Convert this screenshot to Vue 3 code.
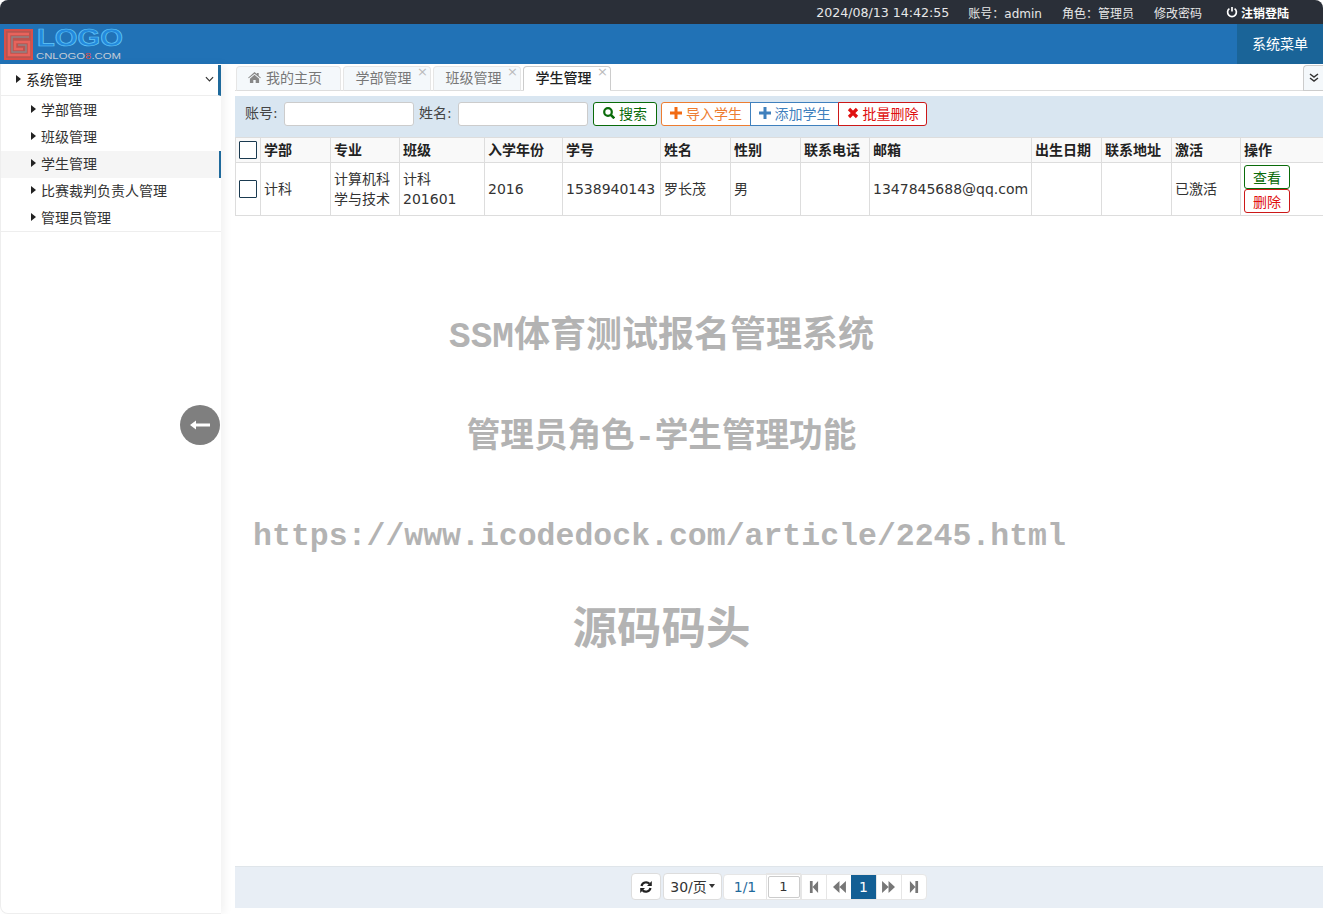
<template>
  <div class="page">
    <div class="topbar">
      <span class="time">2024/08/13 14:42:55</span>
      <span>账号：<em>admin</em></span>
      <span>角色：管理员</span>
      <span>修改密码</span>
      <span class="logout">
        <svg viewBox="0 0 12 12" class="ico-power"><path d="M3.400 2.600a4.400 4.400 0 1 0 5.200 0M6 1v4.600" fill="none" stroke="#fff" stroke-width="1.700"/></svg>
        注销登陆
      </span>
    </div>

    <div class="header">
      <svg class="logo" viewBox="0 0 126 40" width="126" height="40">
        <rect x="4" y="5" width="29" height="31" fill="#d9504a"/>
        <rect x="6" y="7" width="25" height="27" fill="#b9544f"/>
        <path d="M29 10H9v21h20V18H15v7h8" fill="none" stroke="#e8635c" stroke-width="2.500"/>
        <path d="M29 13H12v15h14v-7h-8" fill="none" stroke="#8f8285" stroke-width="1.500"/>
        <text x="37" y="22" textLength="86" lengthAdjust="spacingAndGlyphs" class="logo-big">LOGO</text>
        <text x="36" y="35" textLength="85" lengthAdjust="spacingAndGlyphs" class="logo-small">CNLOGO<tspan class="logo-eight">8</tspan>.COM</text>
      </svg>
      <div class="sys-menu">系统菜单</div>
    </div>

    <div class="main">
      <aside class="sidebar">
        <div class="menu-title">
          <span class="arrow"></span>
          <span class="menu-text">系统管理</span>
          <svg class="chev" viewBox="0 0 10 6"><path d="M1 1l4 4 4-4" fill="none" stroke="#333" stroke-width="1.300"/></svg>
        </div>
        <div class="menu-list">
          <div v-for="item in menus" :key="item" :class="['menu-item', { active: item === '学生管理' }]">
            <span class="arrow"></span>{{ item }}
          </div>
        </div>
        <button class="collapse">
          <svg viewBox="0 0 20 10" width="20" height="10"><path d="M0 5l6-4.500v3h14v3H6v3z" fill="#fff"/></svg>
        </button>
      </aside>

      <div class="content">
        <div class="tabs">
          <div class="tab home">
            <svg viewBox="0 0 14 12" class="ico-home"><path d="M7 0l2.600 2.300V1h2v3l2.400 2.200-.7.7L7 2 .7 6.900 0 6.200zM2 7.300L7 3l5 4.300V12H8.300V8.700H5.700V12H2z" fill="#888"/></svg>
            我的主页
          </div>
          <div v-for="t in tabs" :key="t" :class="['tab', { current: t === '学生管理' }]">
            {{ t }}<span class="tab-close">×</span>
          </div>
          <div class="tab-more">
            <svg viewBox="0 0 10 10" width="10" height="10"><path d="M1 1l4 3 4-3M1 5l4 3 4-3" fill="none" stroke="#333" stroke-width="1.500"/></svg>
          </div>
        </div>

        <div class="toolbar">
          <label>账号:</label><input class="field" type="text" />
          <label class="second">姓名:</label><input class="field" type="text" />
          <button class="btn search">
            <svg viewBox="0 0 12 12" class="ico"><circle cx="5" cy="5" r="3.800" fill="none" stroke="#0a6b0a" stroke-width="2.200"/><path d="M7.800 7.800L11.300 11.300" stroke="#0a6b0a" stroke-width="2.600"/></svg>
            搜索
          </button>
          <div class="btn-group">
            <button class="btn import">
              <svg viewBox="0 0 12 12" class="ico"><path d="M6 0v12M0 6h12" stroke="#f26a12" stroke-width="3"/></svg>
              导入学生
            </button>
            <button class="btn add">
              <svg viewBox="0 0 12 12" class="ico"><path d="M6 0v12M0 6h12" stroke="#3f80bd" stroke-width="3"/></svg>
              添加学生
            </button>
            <button class="btn del">
              <svg viewBox="0 0 12 12" class="ico"><path d="M2 2l8 8M10 2l-8 8" stroke="#e01010" stroke-width="3.200"/></svg>
              批量删除
            </button>
          </div>
        </div>

        <table class="grid">
          <colgroup>
            <col v-for="(w, i) in widths" :key="i" :style="{ width: w + 'px' }" />
          </colgroup>
          <thead>
            <tr>
              <th class="check"><span class="box"></span></th>
              <th v-for="c in columns" :key="c">{{ c }}</th>
            </tr>
          </thead>
          <tbody>
            <tr>
              <td class="check"><span class="box"></span></td>
              <td>计科</td>
              <td>计算机科学与技术</td>
              <td>计科<br />201601</td>
              <td>2016</td>
              <td>1538940143</td>
              <td>罗长茂</td>
              <td>男</td>
              <td></td>
              <td>1347845688@qq.com</td>
              <td></td>
              <td></td>
              <td>已激活</td>
              <td class="ops">
                <button class="op view">查看</button>
                <button class="op remove">删除</button>
              </td>
            </tr>
          </tbody>
        </table>

        <div class="spacer"></div>

        <div class="pager">
          <button class="pg-btn refresh">
            <svg viewBox="0 0 14 14" width="14" height="14">
              <path d="M2.500 6a4.700 4.700 0 0 1 8-2.200M11.500 8a4.700 4.700 0 0 1-8 2.200" fill="none" stroke="#222" stroke-width="2.200"/>
              <path d="M12.800 1v5H8zM1.200 13V8H6z" fill="#222"/>
            </svg>
          </button>
          <button class="pg-btn size">30/页<span class="caret"></span></button>
          <div class="pg-group">
            <span class="pg-info">1/1</span>
            <span class="pg-input-wrap"><input class="pg-input" value="1" /></span>
            <span class="pg-cell"><svg viewBox="0 0 11 13" width="10" height="12"><path d="M1 0h3v13H1zM10 0v13L4 6.500z" fill="#777"/></svg></span>
            <span class="pg-cell"><svg viewBox="0 0 15 13" width="14" height="12"><path d="M8 0v13L1 6.500zM15 0v13L8 6.500z" fill="#777"/></svg></span>
            <span class="pg-cell on">1</span>
            <span class="pg-cell"><svg viewBox="0 0 15 13" width="14" height="12"><path d="M0 0v13l7-6.500zM7 0v13l7-6.500z" fill="#777"/></svg></span>
            <span class="pg-cell"><svg viewBox="0 0 11 13" width="10" height="12"><path d="M1 0v13l6-6.500zM7 0h3v13H7z" fill="#777"/></svg></span>
          </div>
        </div>
      </div>
    </div>

    <div class="watermark">
      <p class="w1">SSM体育测试报名管理系统</p>
      <p class="w2">管理员角色-学生管理功能</p>
      <p class="w3">https://www.icodedock.com/article/2245.html</p>
      <p class="w4">源码码头</p>
    </div>
  </div>
</template>

<script setup>
const menus = ['学部管理', '班级管理', '学生管理', '比赛裁判负责人管理', '管理员管理']
const tabs = ['学部管理', '班级管理', '学生管理']
const columns = ['学部', '专业', '班级', '入学年份', '学号', '姓名', '性别', '联系电话', '邮箱', '出生日期', '联系地址', '激活', '操作']
const widths = [25, 70, 69, 85, 78, 98, 70, 70, 69, 162, 70, 70, 69, 83]
</script>

<style>
html, body {
  margin: 0;
  background: #fff;
}
</style>

<style scoped>
.page {
  position: relative;
  display: flex;
  flex-direction: column;
  height: 914px;
  overflow: hidden;
  font-family: "DejaVu Sans", "Noto Sans CJK SC", sans-serif;
  font-size: 14px;
  color: #333;
}

.topbar {
  height: 24px;
  flex: none;
  display: flex;
  justify-content: flex-end;
  align-items: center;
  gap: 20px;
  padding-right: 34px;
  background: #2a2f38;
  color: #e8e8e8;
  font-size: 12px;
  border-radius: 8px 8px 0 0;
}

.topbar em {
  font-style: normal;
  font-size: 12px;
}

.time {
  margin-right: -1px;
  font-size: 12.600px;
}

.logout {
  display: flex;
  align-items: center;
  gap: 3px;
  margin-left: 4px;
  font-weight: bold;
  color: #fff;
}

.ico-power {
  width: 12px;
  height: 12px;
}

.header {
  height: 40px;
  flex: none;
  display: flex;
  justify-content: space-between;
  align-items: center;
  background: #2172b6;
}

.logo-big {
  font-family: "Liberation Sans", sans-serif;
  font-size: 24px;
  font-weight: bold;
  fill: #2389dc;
  stroke: #62c6f7;
  stroke-width: 0.700;
}

.logo-small {
  font-family: "Liberation Sans", sans-serif;
  font-size: 9px;
  fill: #c4cdd6;
}

.logo-eight {
  fill: #d9504a;
}

.sys-menu {
  width: 86px;
  height: 40px;
  line-height: 40px;
  text-align: center;
  background: #1a6498;
  color: #fff;
  font-size: 14px;
}

.main {
  flex: 1;
  display: flex;
  min-height: 0;
}

.sidebar {
  position: relative;
  width: 221px;
  flex: none;
  margin-right: 14px;
  background: #fff;
  border-left: 1px solid #eee;
  border-bottom: 1px solid #eee;
  border-bottom-left-radius: 8px;
  box-sizing: border-box;
  box-shadow: 4px 0 8px rgba(0, 0, 0, 0.05);
}

.menu-title {
  display: flex;
  align-items: center;
  height: 31px;
  margin-top: 1px;
  padding: 0 0 3px 15px;
  border-bottom: 1px solid #eee;
  border-right: 3px solid #1f6a9c;
  box-sizing: border-box;
  color: #222;
}

.menu-text {
  flex: 1;
}

.arrow {
  display: inline-block;
  width: 0;
  height: 0;
  margin-right: 5px;
  border-left: 5px solid #222;
  border-top: 4px solid transparent;
  border-bottom: 4px solid transparent;
}

.chev {
  width: 9px;
  height: 6px;
  margin-right: 4px;
}

.menu-list {
  height: 136px;
  padding-top: 1px;
  border-bottom: 1px solid #eee;
  box-sizing: border-box;
}

.menu-item {
  display: flex;
  align-items: center;
  height: 27px;
  padding: 0 0 4px 30px;
  font-size: 14px;
  color: #333;
  box-sizing: border-box;
}

.menu-item.active {
  background: #f5f5f5;
  box-shadow: inset -2px 0 0 #1f6a9c;
}

.collapse {
  position: absolute;
  top: 341px;
  right: 1px;
  display: flex;
  align-items: center;
  justify-content: center;
  width: 40px;
  height: 40px;
  padding: 0;
  border: none;
  border-radius: 50%;
  background: #7f7f7f;
}

.content {
  flex: 1;
  min-width: 0;
  display: flex;
  flex-direction: column;
  padding-bottom: 6px;
}

.tabs {
  display: flex;
  align-items: flex-end;
  height: 27px;
  gap: 2px;
  padding-left: 1px;
  border-bottom: 1px solid #ddd;
  box-sizing: border-box;
}

.tab {
  position: relative;
  display: flex;
  align-items: center;
  justify-content: center;
  gap: 5px;
  width: 88px;
  height: 25px;
  margin-bottom: -1px;
  padding: 0 7px 3px 0;
  border: 1px solid #e6e6e6;
  border-bottom: 1px solid #ddd;
  border-radius: 4px 4px 0 0;
  background: #f4f8fb;
  color: #777;
  font-size: 14px;
  box-sizing: border-box;
}

.tab.home {
  width: 105px;
}

.tab.current {
  background: #fff;
  border-color: #ccc;
  border-bottom-color: #fff;
  color: #222;
  font-weight: 500;
}

.tab-close {
  position: absolute;
  top: -3px;
  right: 2px;
  font-size: 13px;
  color: #bbb;
}

.ico-home {
  width: 13px;
  height: 11px;
}

.tab-more {
  display: flex;
  align-items: center;
  justify-content: center;
  width: 20px;
  height: 26px;
  margin-left: auto;
  margin-bottom: -1px;
  border: 1px solid #ccc;
  border-right: none;
  border-radius: 4px 0 0 0;
  box-sizing: border-box;
  background: #f4f8fb;
}

.toolbar {
  display: flex;
  align-items: flex-start;
  height: 41px;
  margin-top: 5px;
  padding: 6px 0 0 10px;
  flex: none;
  background: #d9e6f1;
  color: #444;
  font-size: 14px;
  box-sizing: border-box;
}

.toolbar label {
  width: 39px;
  line-height: 22px;
  white-space: nowrap;
}

.toolbar label.second {
  margin-left: 5px;
}

.field {
  width: 130px;
  height: 24px;
  border: 1px solid #ccc;
  border-radius: 3px;
  box-sizing: border-box;
  background: #fff;
  outline: none;
}

.btn {
  display: inline-flex;
  align-items: center;
  justify-content: center;
  gap: 4px;
  height: 24px;
  padding: 0 0 2px;
  background: #fff;
  border: 1px solid;
  font-family: inherit;
  font-size: 14px;
  box-sizing: border-box;
}

.ico {
  width: 12px;
  height: 12px;
}

.search {
  width: 64px;
  margin-left: 5px;
  border-color: #0a6b0a;
  border-radius: 3px;
  color: #0a6b0a;
}

.btn-group {
  display: flex;
  margin-left: 4px;
}

.import {
  width: 90px;
  border-color: #ed7d31;
  border-radius: 3px 0 0 3px;
  color: #ed7d31;
}

.add {
  width: 89px;
  margin-left: -1px;
  border-color: #3f80bd;
  color: #3f80bd;
}

.del {
  width: 89px;
  margin-left: -1px;
  border-color: #cc1818;
  border-radius: 0 3px 3px 0;
  color: #e01010;
}

.grid {
  width: 1088px;
  table-layout: fixed;
  border-collapse: collapse;
  flex: none;
  color: #333;
  font-size: 14px;
}

.grid th,
.grid td {
  border: 1px solid #ddd;
  padding: 0 0 0 3px;
  text-align: left;
  line-height: 20px;
  box-sizing: border-box;
}

.grid th {
  height: 25px;
  background: #f9f9f9;
  font-weight: bold;
  color: #222;
  white-space: nowrap;
}

.grid td {
  height: 53px;
  word-break: break-all;
}

.grid .check {
  padding: 0;
  text-align: center;
}

.box {
  display: block;
  width: 16px;
  height: 16px;
  margin: 0 auto;
  border: 1px solid #1a3a50;
  background: #fff;
  border-radius: 1px;
}

.ops {
  line-height: 0;
}

.op {
  display: block;
  width: 46px;
  height: 24px;
  padding: 0 0 1px;
  background: #fff;
  border: 1px solid;
  border-radius: 3px;
  font-family: inherit;
  font-size: 14px;
  box-sizing: border-box;
}

.view {
  border-color: #0a6b0a;
  color: #0a6b0a;
}

.remove {
  border-color: #cc1818;
  color: #e01010;
}

.spacer {
  flex: 1;
}

.pager {
  display: flex;
  justify-content: center;
  align-items: center;
  gap: 2px;
  height: 42px;
  flex: none;
  padding-bottom: 2px;
  background: #e8eef5;
  border-top: 1px solid #dfe5ea;
  box-sizing: border-box;
}

.pg-btn {
  display: inline-flex;
  align-items: center;
  justify-content: center;
  height: 27px;
  padding: 0;
  background: #fff;
  border: 1px solid #ddd;
  border-radius: 4px;
  font-family: inherit;
  color: #333;
  box-sizing: border-box;
}

.refresh {
  width: 30px;
}

.size {
  width: 59px;
  padding-bottom: 2px;
  font-size: 14px;
}

.caret {
  width: 0;
  height: 0;
  margin-left: 2px;
  border-top: 4px solid #333;
  border-left: 3.500px solid transparent;
  border-right: 3.500px solid transparent;
}

.pg-group {
  display: flex;
  align-items: center;
  height: 24px;
  margin-left: -1px;
  border: 1px solid #e6e6e6;
  border-radius: 4px;
  background: #fff;
}

.pg-info {
  width: 42px;
  text-align: center;
  color: #1f6a9c;
  font-size: 14px;
}

.pg-input-wrap {
  display: flex;
  align-items: center;
  justify-content: center;
  width: 35px;
  height: 27px;
  border: 1px solid #e6e6e6;
  box-sizing: border-box;
}

.pg-input {
  width: 32px;
  height: 22px;
  padding: 0;
  border: 1px solid #ccc;
  border-radius: 2px;
  box-sizing: border-box;
  text-align: center;
  font-family: inherit;
  font-size: 13px;
  color: #333;
  outline: none;
}

.pg-cell {
  display: flex;
  align-items: center;
  justify-content: center;
  width: 25px;
  height: 24px;
  border-left: 1px solid #e6e6e6;
  box-sizing: border-box;
}

.pg-cell.on {
  background: #135f94;
  color: #fff;
  font-size: 14px;
  border-left: none;
}

.watermark {
  position: absolute;
  inset: 0;
  pointer-events: none;
  text-align: center;
  color: #b3b3b3;
  font-family: "Liberation Mono", "Noto Sans CJK SC", monospace;
  font-weight: bold;
}

.watermark p {
  position: absolute;
  left: 0;
  right: 0;
  margin: 0;
  line-height: 50px;
  white-space: nowrap;
}

.w1 {
  top: 313px;
  font-size: 36px;
}

.w2 {
  top: 413px;
  font-size: 33.600px;
}

.w3 {
  top: 512px;
  padding-right: 4px;
  font-size: 31.500px;
}

.w4 {
  top: 607px;
  font-size: 44.500px;
}
</style>
